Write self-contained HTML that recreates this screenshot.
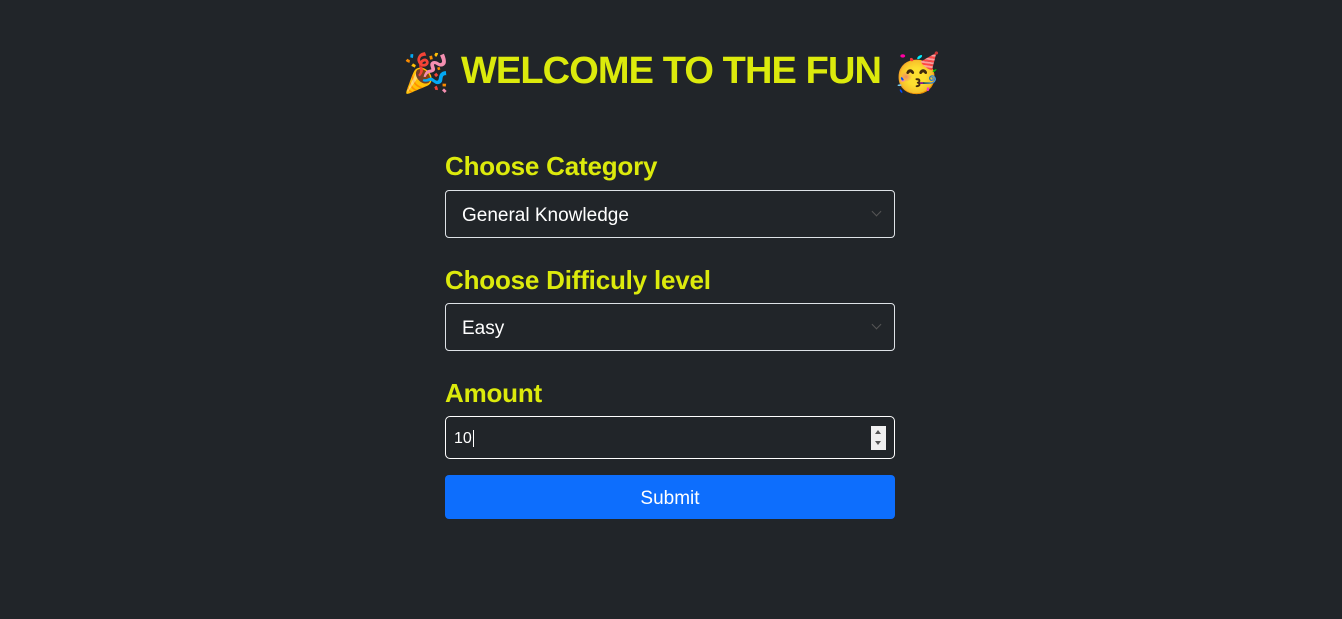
<!DOCTYPE html>
<html><head><style>
body{margin:0;background:#212529;font-family:"Liberation Sans",sans-serif;width:1342px;height:619px;overflow:hidden;position:relative}
.t{position:absolute;top:50px;left:0;width:1342px;text-align:center;color:#dcea0c;font-size:38px;font-weight:bold;letter-spacing:-0.9px;white-space:nowrap}
.t .e{font-size:38px;display:inline-block;vertical-align:-3px;margin:0 12px}
.l{position:absolute;left:445px;color:#dcea0c;font-size:26px;font-weight:bold;letter-spacing:-0.2px}
.s{position:absolute;left:445px;width:448px;height:46px;border:1px solid #dee2e6;border-radius:4px;color:#fff;font-size:19px;line-height:50px;box-sizing:content-box}
.s span{position:absolute;left:16px}
.s i{position:absolute;right:14px;top:17px;width:6px;height:6px;border-right:1.5px solid #555;border-bottom:1.5px solid #555;transform:rotate(45deg)}
.b{position:absolute;left:445px;top:475px;width:450px;height:44px;background:#0d6efd;border-radius:4px;color:#fff;font-size:19px;text-align:center;line-height:47px}
</style></head><body>
<div class="t"><span class="e">🎉</span>WELCOME TO THE FUN<span class="e">🥳</span></div>
<div class="l" style="top:151px">Choose Category</div>
<div class="s" style="top:190px"><span>General Knowledge</span><i></i></div>
<div class="l" style="top:265px">Choose Difficuly level</div>
<div class="s" style="top:303px"><span>Easy</span><i></i></div>
<div class="l" style="top:378px">Amount</div>
<div class="s" style="top:416px;height:41px;line-height:43px;border:1px solid #fff;border-radius:5px;font-size:16px"><span style="left:8px">10<span style="position:static;border-left:1px solid #fff;margin-left:1px"></span></span>
<div style="position:absolute;right:8px;top:9px;width:15px;height:24px;background:#f0f0f0"><div style="position:absolute;left:4px;top:4px;border:3.5px solid transparent;border-bottom:4px solid #555;border-top:0"></div><div style="position:absolute;left:4px;top:15px;border:3.5px solid transparent;border-top:4px solid #555;border-bottom:0"></div></div></div>
<div class="b">Submit</div>
</body></html>
